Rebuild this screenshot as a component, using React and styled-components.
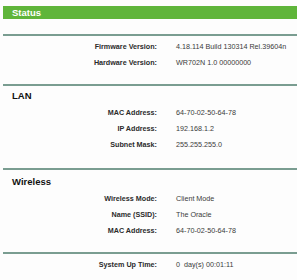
import React from "react";
import styled, { createGlobalStyle } from "styled-components";

const Global = createGlobalStyle`
  html, body { margin: 0; padding: 0; background: #fdfdfd; }
  body { font-family: "Liberation Sans", Arial, sans-serif; }
`;

const Page = styled.div`
  padding: 6px 0 0 3px;
  width: 294px;
`;

const TitleBar = styled.div`
  height: 13px;
  background: #5fb53a;
  color: #fff;
  font-weight: bold;
  font-size: 9.5px;
  line-height: 13px;
  padding-left: 9px;
`;

const Gap = styled.div`
  height: 15px;
`;

const Section = styled.section`
  border-top: 2px solid #7a9d91;
  padding: ${(p) => p.$top}px 0 ${(p) => p.$bottom}px;
`;

const Heading = styled.div`
  height: 16px;
  line-height: 16px;
  padding-left: 9px;
  font-weight: bold;
  font-size: 9.5px;
  color: #111;
`;

const Grid = styled.div`
  display: grid;
  grid-template-columns: 154px 1fr;
  column-gap: 19px;
  grid-auto-rows: 16px;
  align-items: center;
  font-size: 7.2px;
`;

const Label = styled.div`
  text-align: right;
  font-weight: bold;
  color: #2b2b2b;
`;

const Value = styled.div`
  color: #3a3a3a;
  white-space: pre;
`;

const sections = [
  {
    top: 2,
    bottom: 14,
    rows: [
      ["Firmware Version:", "4.18.114 Build 130314 Rel.39604n"],
      ["Hardware Version:", "WR702N 1.0 00000000"],
    ],
  },
  {
    title: "LAN",
    top: 2,
    bottom: 16,
    rows: [
      ["MAC Address:", "64-70-02-50-64-78"],
      ["IP Address:", "192.168.1.2"],
      ["Subnet Mask:", "255.255.255.0"],
    ],
  },
  {
    title: "Wireless",
    top: 4,
    bottom: 14,
    rows: [
      ["Wireless Mode:", "Client Mode"],
      ["Name (SSID):", "The Oracle"],
      ["MAC Address:", "64-70-02-50-64-78"],
    ],
  },
  {
    top: 2,
    bottom: 8,
    rows: [["System Up Time:", "0  day(s) 00:01:11"]],
  },
];

export default function App() {
  return (
    <>
      <Global />
      <Page>
        <TitleBar>Status</TitleBar>
        <Gap />
        {sections.map((s, i) => (
          <Section key={i} $top={s.top} $bottom={s.bottom}>
            {s.title && <Heading>{s.title}</Heading>}
            <Grid>
              {s.rows.map(([l, v]) => (
                <React.Fragment key={l}>
                  <Label>{l}</Label>
                  <Value>{v}</Value>
                </React.Fragment>
              ))}
            </Grid>
          </Section>
        ))}
      </Page>
    </>
  );
}
